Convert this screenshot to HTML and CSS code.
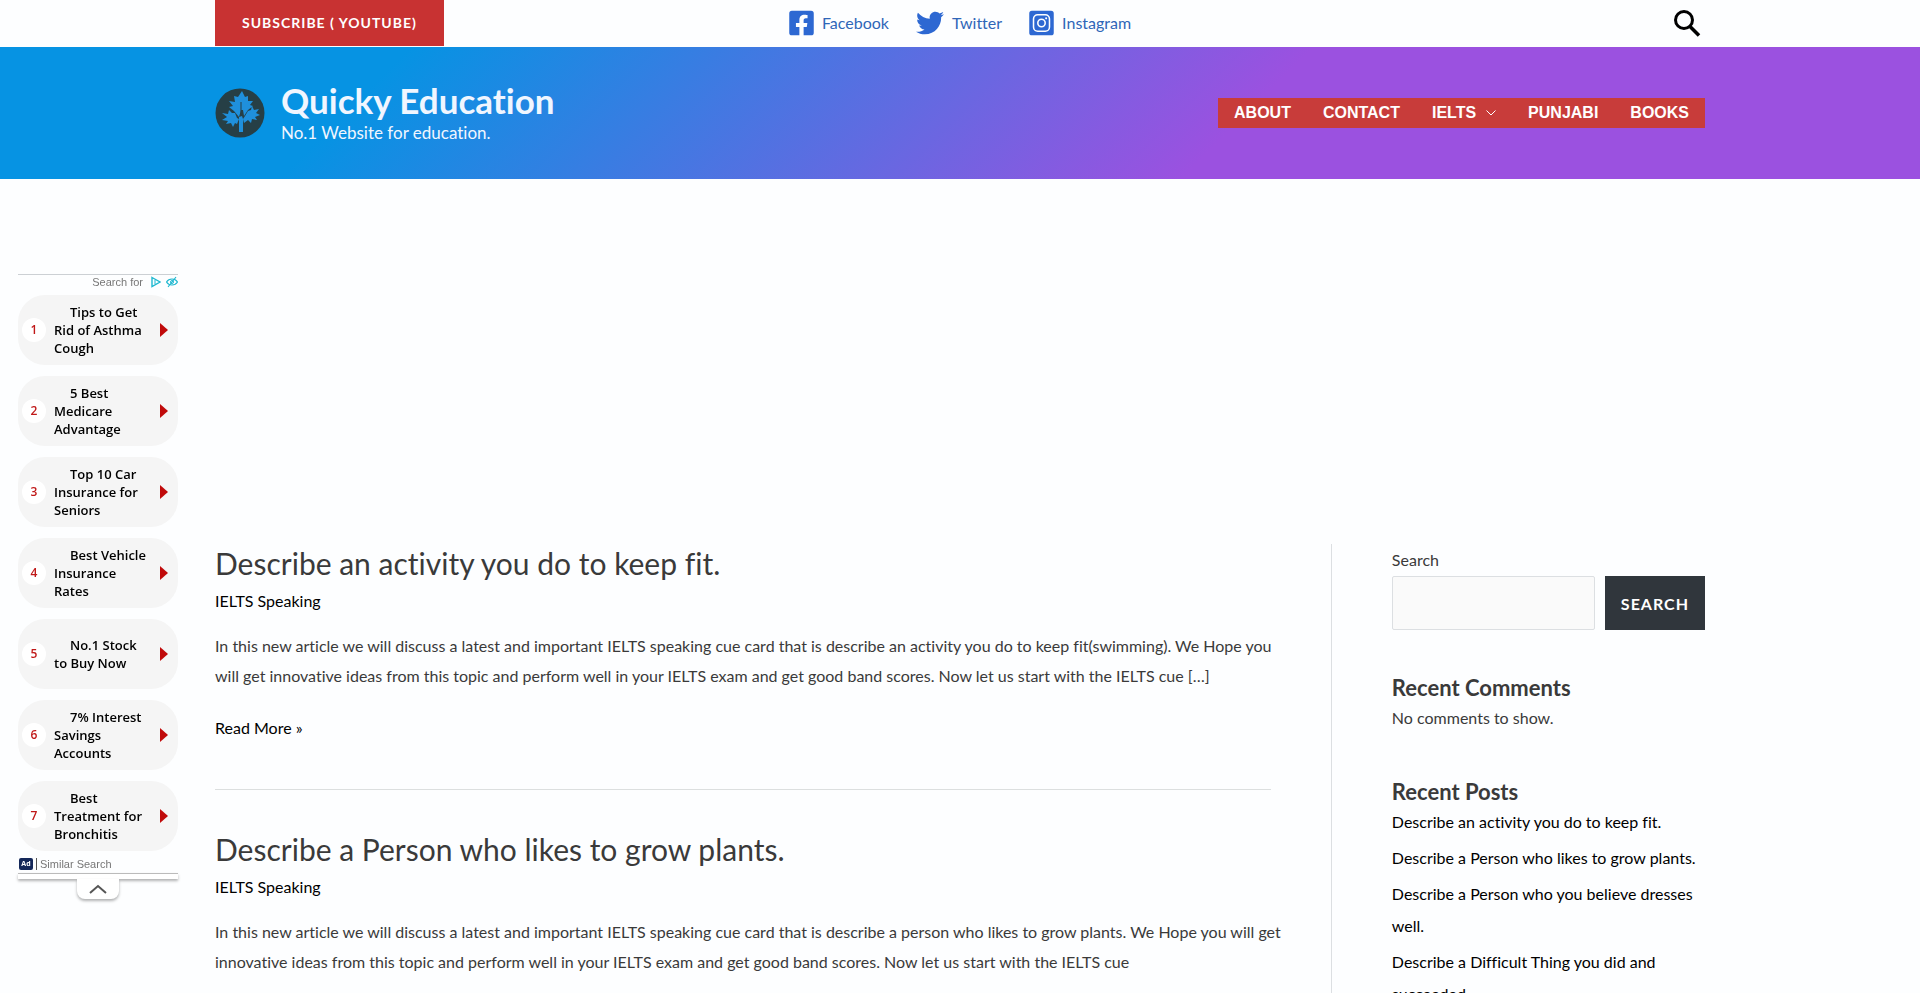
FILE: index.html
```html
<!DOCTYPE html>
<html lang="en">
  <head>
    <meta charset="utf-8" />
    <title>Quicky Education</title>
    <link rel="stylesheet" href="styles.css" />
  </head>
  <body>
    <div class="top-bar">
      <div class="wrap top-bar-inner">
        <button class="subscribe" type="button">SUBSCRIBE ( YOUTUBE)</button>
        <div class="social">
          <a href="#">
            <svg width="25" height="28" viewBox="0 0 448 512"><path d="M400 32H48A48 48 0 0 0 0 80v352a48 48 0 0 0 48 48h137.250V327.690h-63V256h63v-54.640c0-62.150 37-96.480 93.670-96.480 27.140 0 55.520 4.840 55.520 4.840v61h-31.270c-30.810 0-40.420 19.120-40.420 38.730V256h68.780l-11 71.690h-57.780V480H400a48 48 0 0 0 48-48V80a48 48 0 0 0-48-48z"/></svg>
            <span>Facebook</span>
          </a>
          <a href="#">
            <svg width="28" height="28" viewBox="0 0 512 512"><path d="M459.370 151.716c.325 4.548.325 9.097.325 13.645 0 138.720-105.583 298.558-298.558 298.558-59.452 0-114.680-17.219-161.137-47.106 8.447.974 16.568 1.299 25.340 1.299 49.055 0 94.213-16.568 130.274-44.832-46.132-.975-84.792-31.188-98.112-72.772 6.498.974 12.995 1.624 19.818 1.624 9.421 0 18.843-1.300 27.614-3.573-48.081-9.747-84.143-51.980-84.143-102.985v-1.299c13.969 7.797 30.214 12.670 47.431 13.319-28.264-18.843-46.781-51.005-46.781-87.391 0-19.492 5.197-37.360 14.294-52.954 51.655 63.675 129.300 105.258 216.365 109.807-1.624-7.797-2.599-15.918-2.599-24.040 0-57.828 46.782-104.934 104.934-104.934 30.213 0 57.502 12.670 76.670 33.137 23.715-4.548 46.456-13.320 66.599-25.340-7.798 24.366-24.366 44.833-46.132 57.827 21.117-2.273 41.584-8.122 60.426-16.243-14.292 20.791-32.161 39.308-52.628 54.253z"/></svg>
            <span>Twitter</span>
          </a>
          <a href="#">
            <svg width="25" height="28" viewBox="0 0 448 512"><path fill-rule="evenodd" d="M48 32H400a48 48 0 0 1 48 48V432a48 48 0 0 1-48 48H48a48 48 0 0 1-48-48V80a48 48 0 0 1 48-48zM154 92a90 90 0 0 0-90 90V330a90 90 0 0 0 90 90H294a90 90 0 0 0 90-90V182a90 90 0 0 0-90-90zM156 121H292a64 64 0 0 1 64 64V327a64 64 0 0 1-64 64H156a64 64 0 0 1-64-64V185a64 64 0 0 1 64-64zM224 174a82 82 0 1 0 0 164a82 82 0 1 0 0-164zM224 203a53 53 0 1 1 0 106a53 53 0 1 1 0-106zM309 152a19 19 0 1 0 0 38a19 19 0 1 0 0-38z"/></svg>
            <span>Instagram</span>
          </a>
        </div>
        <a class="search-icon" href="#" aria-label="Search">
          <svg width="28" height="28" viewBox="0 0 28 28" fill="none" stroke="#000"><circle cx="11" cy="11" r="8.500" stroke-width="3"/><path d="M17 17.500L26 26.500" stroke-width="3.600"/></svg>
        </a>
      </div>
    </div>

    <header class="site-header">
      <div class="wrap header-inner">
        <a class="brand" href="#">
          <svg width="50" height="50" viewBox="0 0 50 50"><circle cx="25" cy="25" r="24.500" fill="#263f46"/><path fill="#1f90dc" d="M27 3l3 6 3-1 0 5 5 0-3 4 3 1-5 4-4 6-1-6-2 0-2 7-5-6-5-4 4-1-4-5 6 1-1-6 4 1zM20 25l2 5 2 1-2 5-2-1-2 4-2-4-5 1 2-3-6-1 5-3-5-4 6 1 1-4 3 3zM30 28l3-5 3-1 1-4 2 4 5-1-3 4 4 2-5 2 2 3-5-1-1 4-3-3-4 3-1-4zM24 29l3-1 1 3v13h-4z"/><path d="M26 14v13" stroke="#263f46" fill="none"/></svg>
          <span class="brand-text">
            <span class="site-title">Quicky Education</span>
            <span class="tagline">No.1 Website for education.</span>
          </span>
        </a>
        <nav class="main-nav">
          <a href="#">ABOUT</a>
          <a href="#">CONTACT</a>
          <a href="#">IELTS <svg width="10" height="6" viewBox="0 0 10 6"><path d="M.500 .500l4.500 4.500 4.500-4.500" fill="none" stroke="#fff"/></svg></a>
          <a href="#">PUNJABI</a>
          <a href="#">BOOKS</a>
        </nav>
      </div>
    </header>

    <div class="wrap content">
      <main class="posts">
        <article class="post">
          <h2><a href="#">Describe an activity you do to keep fit.</a></h2>
          <a class="category" href="#">IELTS Speaking</a>
          <p>In this new article we will discuss a latest and important IELTS speaking cue card that is describe an activity you do to keep fit(swimming). We Hope you will get innovative ideas from this topic and perform well in your IELTS exam and get good band scores. Now let us start with the IELTS cue […]</p>
          <a class="read-more" href="#">Read More »</a>
        </article>
        <article class="post">
          <h2><a href="#">Describe a Person who likes to grow plants.</a></h2>
          <a class="category" href="#">IELTS Speaking</a>
          <p>In this new article we will discuss a latest and important IELTS speaking cue card that is describe a person who likes to grow plants. We Hope you will get innovative ideas from this topic and perform well in your IELTS exam and get good band scores. Now let us start with the IELTS cue</p>
        </article>
      </main>
      <aside class="sidebar">
        <form class="search-form">
          <label for="search">Search</label>
          <div class="search-row">
            <input type="search" id="search" />
            <button type="submit">SEARCH</button>
          </div>
        </form>
        <section class="widget">
          <h2>Recent Comments</h2>
          <p>No comments to show.</p>
        </section>
        <section class="widget">
          <h2>Recent Posts</h2>
          <ul>
            <li><a href="#">Describe an activity you do to keep fit.</a></li>
            <li><a href="#">Describe a Person who likes to grow plants.</a></li>
            <li><a href="#">Describe a Person who you believe dresses well.</a></li>
            <li><a href="#">Describe a Difficult Thing you did and succeeded.</a></li>
          </ul>
        </section>
      </aside>
    </div>

    <div class="side-ad">
      <div class="ad-head">
        <span>Search for</span>
        <svg width="10" height="12" viewBox="0 0 10 12" fill="none" stroke="#1fb8d0"><path d="M1 1.500L9 6 1 10.500z" stroke-width="1.400"/><path d="M4 4v4"/></svg>
        <svg width="12" height="12" viewBox="0 0 12 12" fill="none" stroke="#1fb8d0"><path d="M.500 6C3 2 9 2 11.500 6 9 10 3 10 .500 6z" stroke-width="1.200"/><circle cx="6" cy="6" r="1.500"/><path d="M2 11L10 1" stroke-width="1.200"/></svg>
      </div>
      <ul class="ad-list">
        <li><a href="#"><span class="num">1</span><span class="label">Tips to Get Rid of Asthma Cough</span></a></li>
        <li><a href="#"><span class="num">2</span><span class="label">5 Best Medicare Advantage</span></a></li>
        <li><a href="#"><span class="num">3</span><span class="label">Top 10 Car Insurance for Seniors</span></a></li>
        <li><a href="#"><span class="num">4</span><span class="label">Best Vehicle Insurance Rates</span></a></li>
        <li><a href="#"><span class="num">5</span><span class="label">No.1 Stock to Buy Now</span></a></li>
        <li><a href="#"><span class="num">6</span><span class="label">7% Interest Savings Accounts</span></a></li>
        <li><a href="#"><span class="num">7</span><span class="label">Best Treatment for Bronchitis</span></a></li>
      </ul>
      <div class="ad-foot"><span class="ad-badge">Ad</span><span class="ad-source">Similar Search</span></div>
      <div class="ad-edge"></div>
      <button class="ad-toggle" type="button" aria-label="Collapse">
        <svg width="18" height="10" viewBox="0 0 18 10"><path d="M1 9l8-7 8 7" fill="none" stroke="#555" stroke-width="2"/></svg>
      </button>
    </div>
  </body>
</html>
```
FILE: styles.css
```css
* {
  box-sizing: border-box;
}
body {
  margin: 0;
  height: 100vh;
  overflow: hidden;
  background-color: #fdfeff;
  color: #3a3a3a;
  font-family: Lato, sans-serif;
  font-size: 16px;
  line-height: 30px;
  font-variant-ligatures: none;
}
a {
  color: #000;
  text-decoration: none;
}
h2,
p,
ul {
  margin: 0;
  padding: 0;
}
ul {
  list-style: none;
}
svg {
  display: block;
  flex: none;
}
.wrap {
  max-width: 1530px;
  margin: 0 auto;
  padding: 0 20px;
}

/* top bar */
.top-bar {
  padding-bottom: 1px;
}
.top-bar-inner {
  display: grid;
  grid-template-columns: 1fr auto 1fr;
  align-items: center;
  height: 46px;
}
.subscribe {
  justify-self: start;
  height: 46px;
  padding: 0 27px 2px;
  border: 0;
  background-color: #c83232;
  color: #fff;
  font: bold 14px Lato, sans-serif;
  letter-spacing: 1px;
}
.social {
  display: flex;
  gap: 27px;
}
.social a {
  display: flex;
  align-items: center;
  gap: 8px;
  color: #2f66b8;
}
.social svg {
  fill: #2d68d2;
}
.search-icon {
  justify-self: end;
  padding-right: 4px;
}

/* header */
.site-header {
  background: linear-gradient(135deg, #0693e3 20%, #9b51e0 64%);
}
.header-inner {
  display: flex;
  align-items: center;
  justify-content: space-between;
  height: 132px;
}
.brand {
  display: flex;
  align-items: center;
  gap: 16px;
  color: #f0f6ff;
}
.brand-text {
  display: flex;
  flex-direction: column;
}
.site-title {
  font-size: 35px;
  font-weight: bold;
  line-height: 40px;
}
.tagline {
  font-size: 17px;
  line-height: 26px;
}
.main-nav {
  display: flex;
  background-color: #c83c3a;
}
.main-nav a {
  display: flex;
  align-items: center;
  gap: 10px;
  padding: 0 16px;
  color: #fff;
  font-family: "Liberation Sans", sans-serif;
  font-weight: bold;
}

/* posts */
.content {
  display: grid;
  grid-template-columns: 3fr 1fr;
  padding-top: 365px;
}
.posts {
  padding-right: 60px;
}
.post {
  margin-bottom: 40px;
  padding-bottom: 46px;
  border-bottom: 1px solid #dcdfdf;
}
.post h2 {
  margin-bottom: 4px;
  font-size: 30px;
  font-weight: normal;
  line-height: 38px;
}
.post h2 a {
  color: #3a3a3a;
}
.category,
.read-more {
  display: block;
}
.post p {
  margin: 15px -16px 22px 0;
}

/* sidebar */
.sidebar {
  padding-left: 60px;
  border-left: 1px solid #dcdfe2;
}
.search-form label {
  display: block;
  line-height: 32px;
}
.search-row {
  display: flex;
  gap: 10px;
}
.search-row input {
  flex: 1;
  min-width: 0;
  height: 54px;
  padding: 0 12px;
  border: 1px solid #dcdfe2;
  border-radius: 2px;
  background-color: #fafafa;
}
.search-row button {
  padding: 0 16px;
  border: 0;
  background-color: #30363c;
  color: #fff;
  font: bold 16px Lato, sans-serif;
  letter-spacing: 1px;
}
.widget {
  margin-top: 44px;
}
.widget h2 {
  font-size: 22px;
  font-weight: bold;
  line-height: 28px;
}
.widget p,
.widget li {
  line-height: 32px;
}
.widget li {
  margin-bottom: 4px;
}

/* floating ad on the left edge */
.side-ad {
  position: fixed;
  top: 274px;
  left: 18px;
  width: 160px;
}
.ad-head {
  display: flex;
  align-items: center;
  justify-content: flex-end;
  gap: 5px;
  height: 15px;
  margin-bottom: 6px;
  border-top: 1px solid #ccd0d4;
  color: #777;
  font: 11px "Liberation Sans", sans-serif;
}
.ad-head span {
  padding-right: 3px;
}
.ad-list {
  display: grid;
  gap: 11px;
}
.ad-list a {
  display: flex;
  align-items: center;
  height: 70px;
  padding: 0 10px 0 4px;
  border-radius: 27px;
  background-color: #f5f5f5;
  font: 600 13px "Open Sans", sans-serif;
  line-height: 18px;
}
.ad-list a::after {
  content: '';
  border-left: 8px solid #c00a0a;
  border-top: 7px solid transparent;
  border-bottom: 7px solid transparent;
}
.num {
  width: 24px;
  height: 24px;
  border-radius: 50%;
  background-color: #fff;
  color: #c01818;
  font-size: 12px;
  line-height: 24px;
  text-align: center;
}
.label {
  flex: 1;
  margin: 0 8px;
  text-indent: 16px;
}
.ad-foot {
  display: flex;
  align-items: center;
  gap: 3px;
  height: 22px;
  padding: 4px 1px 0;
  color: #777;
  font: 11px "Liberation Sans", sans-serif;
}
.ad-badge {
  width: 14px;
  border-radius: 2px;
  background-color: #14285a;
  color: #fff;
  font: bold 7px "Open Sans", sans-serif;
  line-height: 12px;
  text-align: center;
}
.ad-source {
  padding-left: 3px;
  border-left: 1px solid #555;
}
.ad-edge {
  height: 6px;
  border-top: 1px solid #bbb;
  background-color: #fff;
  box-shadow: 0 2px 3px rgba(0, 0, 0, 0.3);
}
.ad-toggle {
  display: flex;
  align-items: center;
  justify-content: center;
  position: relative;
  width: 42px;
  height: 20px;
  margin: 0 auto;
  padding: 0;
  border: 0;
  border-radius: 0 0 8px 8px;
  background-color: #fff;
  box-shadow: 0 2px 3px rgba(0, 0, 0, 0.3);
}
```
